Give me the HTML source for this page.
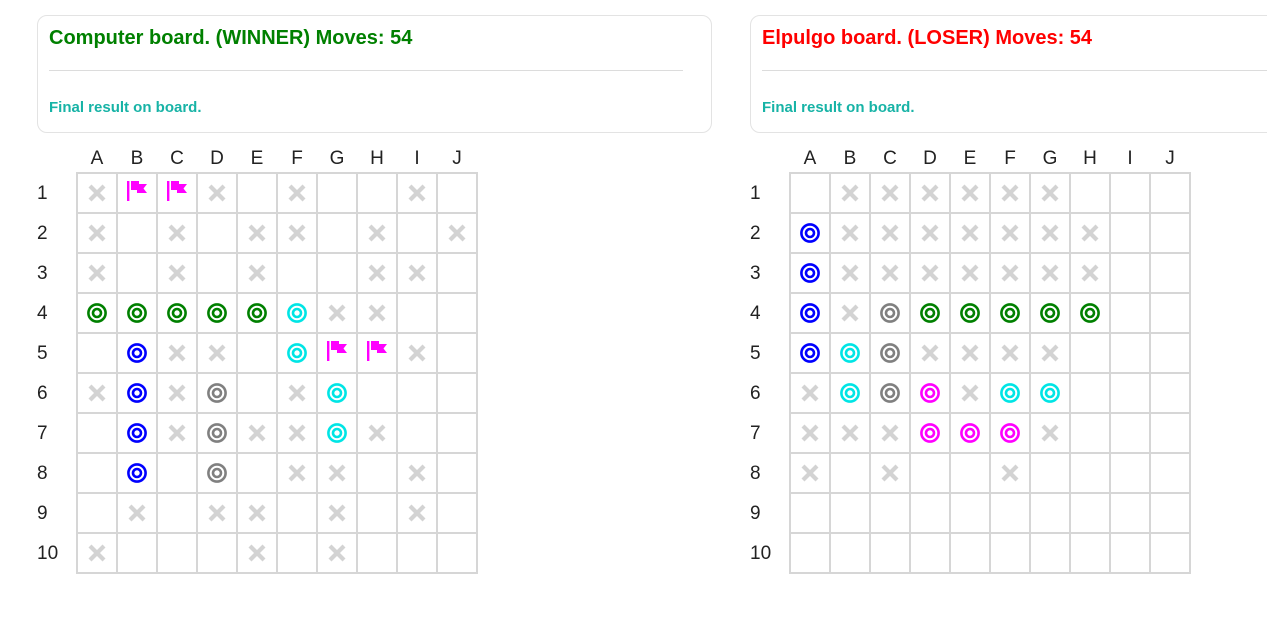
<!DOCTYPE html>
<html><head><meta charset="utf-8"><style>
body{margin:0;background:#fff;font-family:"Liberation Sans",sans-serif;width:1267px;height:627px;overflow:hidden;position:relative}
.card{position:absolute;top:15px;height:118px;border:1px solid #e3e3e3;border-radius:10px;box-sizing:border-box}
.card h2{position:absolute;left:11px;top:11px;margin:0;font-size:20px;font-weight:bold}
.card .hr{position:absolute;left:11px;top:54px;height:1px;background:#dcdcdc}
.card p{position:absolute;left:11px;top:83px;margin:0;font-size:15px;font-weight:bold;color:#17b3a6}
.board{position:absolute;top:143px;width:500px;height:440px}
.hl{position:absolute;top:5px;font-size:19px;color:#222;width:40px;text-align:center}
.rl{position:absolute;left:0;font-size:19px;color:#222}
table{position:absolute;top:29px;border-collapse:collapse;table-layout:fixed;width:402px}
td{width:38px;min-width:38px;height:38px;border:2px solid #d6d6d6;padding:0;text-align:center;vertical-align:middle}
svg{display:block;margin:auto}
</style></head><body>
<div class="card" style="left:37px;width:675px"><h2 style="color:#008000">Computer board. (WINNER) Moves: 54</h2><div class="hr" style="width:634px"></div><p>Final result on board.</p></div>
<div class="card" style="left:750px;width:560px"><h2 style="color:#ff0000">Elpulgo board. (LOSER) Moves: 54</h2><div class="hr" style="width:540px"></div><p>Final result on board.</p></div>
<div id="b1" class="board" style="left:37px"></div>
<div id="b2" class="board" style="left:750px"></div>
<script>
var L=["xffx.x..x.","x.x.xx.x.x","x.x.x..xx.","gggggcxx..",".bxx.cffx.","xbxk.xc...",".bxkxxcx..",".b.k.xx.x.",".x.xx.x.x.","x...x.x..."];
var R=[".xxxxxx...","bxxxxxxx..","bxxxxxxx..","bxkggggg..","bckxxxx...","xckmxcc...","xxxmmmx...","x.x..x....","..........",".........."];
var col={g:"#008000",b:"#0000ff",c:"#00e5e5",k:"#808080",m:"#ff00ff"};
function icon(ch){
 if(ch=="x")return '<svg width="22" height="22"><path d="M4 4L18 18M18 4L4 18" stroke="#d3d3d3" stroke-width="4.2"/></svg>';
 if(ch=="f")return '<svg width="38" height="38" style="margin:0"><rect x="9" y="7" width="2.4" height="20" fill="#f0f"/><path d="M13 7H21V10H29L25.5 14.5L29 19H19V16H13Z" fill="#f0f"/></svg>';
 if(col[ch])return '<svg width="22" height="22"><circle cx="11" cy="11" r="8.6" fill="none" stroke="'+col[ch]+'" stroke-width="2.6"/><circle cx="11" cy="11" r="4" fill="none" stroke="'+col[ch]+'" stroke-width="2.6"/></svg>';
 return '';
}
function build(id,D){
 var h='';var letters="ABCDEFGHIJ";
 for(var i=0;i<10;i++)h+='<div class="hl" style="left:'+(40+i*40)+'px">'+letters[i]+'</div>';
 for(var r=0;r<10;r++)h+='<div class="rl" style="top:'+(40+r*40)+'px">'+(r+1)+'</div>';
 h+='<table style="left:39px">';
 for(var r=0;r<10;r++){h+='<tr>';for(var c=0;c<10;c++)h+='<td>'+icon(D[r][c])+'</td>';h+='</tr>';}
 h+='</table>';
 document.getElementById(id).innerHTML=h;
}
build("b1",L);build("b2",R);
</script>
</body></html>
